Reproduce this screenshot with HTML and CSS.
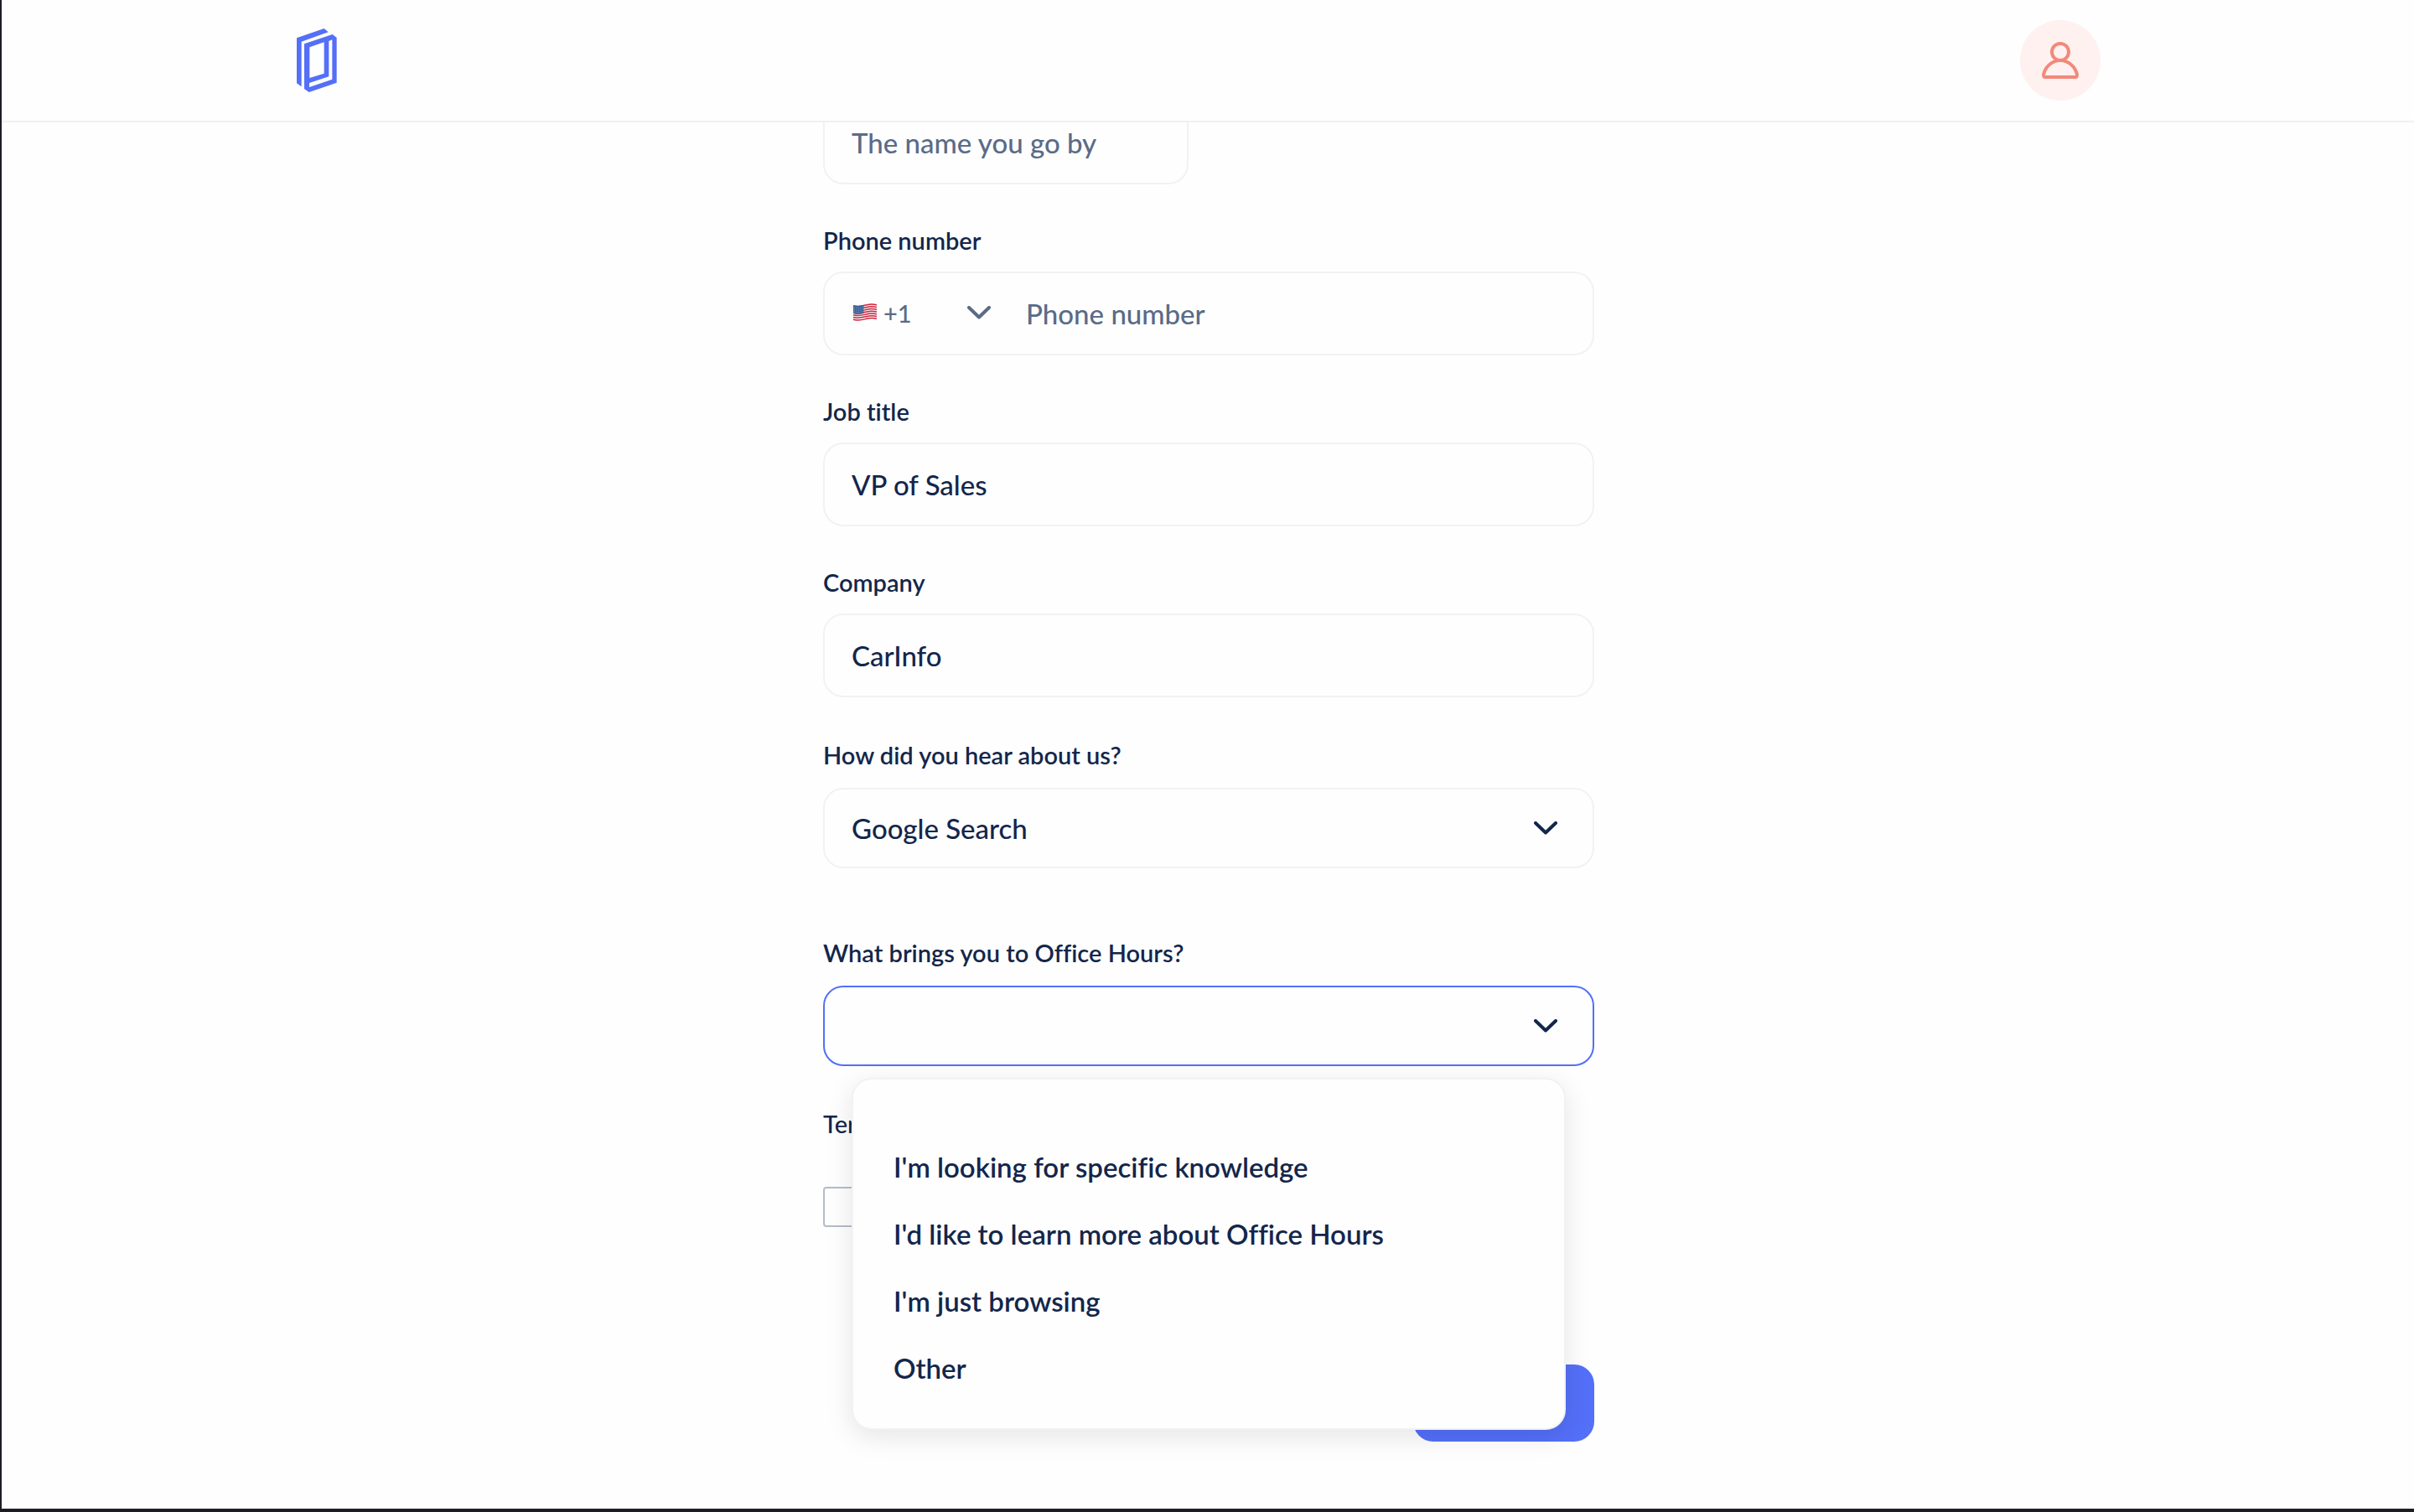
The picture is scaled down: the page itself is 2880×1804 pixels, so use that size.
FILE: index.html
```html
<!DOCTYPE html>
<html lang="en">
<head>
  <meta charset="utf-8">
  <meta name="viewport" content="width=device-width, initial-scale=1">
  <title>Office Hours</title>
  <link rel="stylesheet" href="styles.css">
</head>
<body>
  <header class="topbar">
    <div class="topbar-inner">
      <a class="logo" href="#" aria-label="Office Hours home">
        <svg width="48" height="76" viewBox="0 0 144 228" fill="currentColor" fill-rule="evenodd" aria-hidden="true">
          <path d="M0 34L98 0L113 13L17 47V208L0 196Z"/>
          <path d="M27 55L128 21L143 33V194L44 228L27 216ZM46 67V177L98 161V49ZM115 45V172L45 195V210L127 182V40Z"/>
        </svg>
      </a>
      <button class="avatar" type="button" aria-label="Account">
        <svg width="48" height="48" viewBox="0 0 48 48" fill="none" stroke="currentColor" stroke-width="4" stroke-linejoin="round" aria-hidden="true">
          <circle cx="24" cy="14" r="10"/>
          <path d="M24 24C14 24 6 32 4 41C4 43 4 44 6 44H42C44 44 44 43 44 41C42 32 34 24 24 24Z"/>
        </svg>
      </button>
    </div>
  </header>

  <main class="page">
    <form class="form">
      <div class="field field-half">
        <label class="label" for="name">Preferred name</label>
        <input class="control" id="name" type="text" placeholder="The name you go by">
      </div>

      <div class="field">
        <label class="label" for="phone">Phone number</label>
        <div class="control phone">
          <div class="dial">
            <svg class="flag" width="30" height="22" viewBox="-2 0 30 22" aria-hidden="true">
              <path fill="#f4f2f4" d="M0 2C6 4 12 2 16 1C20 0 24 0 28 1V19C24 18 20 18 16 19C12 20 6 22 0 20Z"/>
              <path fill="none" stroke="#cf2740" stroke-width="1.5" d="M0 2.700C6 4.700 12 2.700 16 1.700S24 .7 28 1.700M0 5.500C6 7.500 12 5.500 16 4.500S24 3.500 28 4.500M0 8.300C6 10.300 12 8.300 16 7.300S24 6.300 28 7.300M0 11C6 13 12 11 16 10S24 9 28 10M0 13.800C6 15.800 12 13.800 16 12.800S24 11.800 28 12.800M0 16.500C6 18.500 12 16.500 16 15.500S24 14.500 28 15.500M0 19.300C6 21.300 12 19.300 16 18.300S24 17.300 28 18.300"/>
              <path fill="#3f6299" d="M0 2C4 3.400 9 3 12.500 2V12C9 13 4 13.400 0 12Z"/>
              <path fill="none" stroke="#8fa6c8" stroke-width="1" stroke-dasharray="1 1.500" d="M1 5C5 6 9 5.500 12 4.500M1 7.500C5 8.500 9 8 12 7M1 10C5 11 9 10.500 12 9.500"/>
            </svg>
            <select class="dial-select" aria-label="Country code">
              <option>+1</option>
            </select>
            <svg class="chevron" width="28" height="16" viewBox="0 0 28 16" aria-hidden="true"><path d="M2 2L14 13.500L26 2"/></svg>
          </div>
          <input class="phone-input" id="phone" type="tel" placeholder="Phone number">
        </div>
      </div>

      <div class="field">
        <label class="label" for="job">Job title</label>
        <input class="control" id="job" type="text" value="VP of Sales">
      </div>

      <div class="field">
        <label class="label" for="company">Company</label>
        <input class="control" id="company" type="text" value="CarInfo">
      </div>

      <div class="field field-select">
        <label class="label" for="source">How did you hear about us?</label>
        <div class="select">
          <select class="control" id="source">
            <option>Google Search</option>
          </select>
          <svg class="chevron" width="28" height="16" viewBox="0 0 28 16" aria-hidden="true"><path d="M2 2L14 13.500L26 2"/></svg>
        </div>
      </div>

      <div class="field field-select field-spaced">
        <label class="label" for="reason">What brings you to Office Hours?</label>
        <div class="select">
          <select class="control control-active" id="reason">
            <option></option>
          </select>
          <svg class="chevron" width="28" height="16" viewBox="0 0 28 16" aria-hidden="true"><path d="M2 2L14 13.500L26 2"/></svg>
          <ul class="menu" role="listbox" aria-label="What brings you to Office Hours?">
            <li class="menu-item" role="option">I'm looking for specific knowledge</li>
            <li class="menu-item" role="option">I'd like to learn more about Office Hours</li>
            <li class="menu-item" role="option">I'm just browsing</li>
            <li class="menu-item" role="option">Other</li>
          </ul>
        </div>
      </div>

      <div class="field field-terms">
        <label class="label label-light" for="terms">Terms</label>
        <input class="checkbox" id="terms" type="checkbox">
      </div>

      <button class="submit" type="submit">Next</button>
    </form>
  </main>
</body>
</html>
```

FILE: styles.css
```css
:root {
  --navy: #13264b;
  --slate: #5a6b87;
  --line: #f1f2f3;
  --blue: #546ff8;
  --frame: #1e1d24;
}

* {
  box-sizing: border-box;
}

body {
  margin: 0;
  min-height: 100vh;
  border-left: 2px solid var(--frame);
  border-bottom: 4px solid var(--frame);
  background: #fefefe;
  color: var(--navy);
  font-family: Lato, "Open Sans", sans-serif;
  font-size: 33px;
  font-weight: 500;
  font-variant-ligatures: none;
}

input,
select,
button {
  font: inherit;
  font-variant-ligatures: none;
  color: inherit;
}

/* Top bar */
.topbar {
  position: fixed;
  top: 0;
  left: 2px;
  right: 0;
  z-index: 2;
  padding-left: 2px;
  border-bottom: 2px solid #f0f1f4;
  background: #fefefe;
}

.topbar-inner {
  display: flex;
  align-items: center;
  justify-content: space-between;
  max-width: 2176px;
  height: 144px;
  margin: 0 auto;
  padding-right: 24px;
}

.logo {
  display: flex;
  color: var(--blue);
}

.avatar {
  display: flex;
  align-items: center;
  justify-content: center;
  width: 96px;
  height: 96px;
  padding: 0;
  border: 0;
  border-radius: 50%;
  background: #fef1ef;
  color: #f08a7b;
}

/* Form */
.page {
  padding: 66px 0 80px 2px;
}

.form {
  display: flex;
  flex-direction: column;
  max-width: 920px;
  margin: 0 auto;
}

.field {
  display: flex;
  flex-direction: column;
  gap: 20px;
  margin-bottom: 50px;
}

.field-half {
  width: 436px;
}

.field-select {
  gap: 22px;
  margin-top: 2px;
  margin-bottom: 52px;
}

.field-spaced {
  margin-top: 32px;
}

.field-terms {
  gap: 58px;
  margin-bottom: 164px;
}

.label {
  font-size: 29px;
  font-weight: 600;
  line-height: 34px;
}

.label-light {
  font-weight: 500;
}

.control {
  width: 100%;
  height: 100px;
  padding: 0 32px;
  border: 2px solid var(--line);
  border-radius: 24px;
  outline: 0;
  background: #fefefe;
  appearance: none;
}

input::placeholder {
  color: var(--slate);
  opacity: 1;
}

.chevron {
  flex: none;
  fill: none;
  stroke: currentColor;
  stroke-width: 4;
  stroke-linecap: round;
  stroke-linejoin: round;
  pointer-events: none;
}

.phone {
  display: flex;
  align-items: center;
  gap: 42px;
}

.dial {
  display: flex;
  align-items: center;
  width: 166px;
  padding-bottom: 2px;
  color: var(--slate);
}

.flag {
  flex: none;
}

.dial-select {
  flex: 1;
  min-width: 0;
  padding: 0 0 0 8px;
  border: 0;
  outline: 0;
  background: none;
  font-size: 29px;
  appearance: none;
}

.phone-input {
  flex: 1;
  min-width: 0;
  padding: 0;
  border: 0;
  outline: 0;
  background: none;
}

.select {
  position: relative;
  display: grid;
  align-items: center;
}

.select .control,
.select .chevron {
  grid-area: 1 / 1;
}

.select .control {
  height: 96px;
}

.select .chevron {
  justify-self: end;
  margin-right: 44px;
  z-index: 1;
}

.control-active {
  border-color: var(--blue);
}

.menu {
  position: absolute;
  top: 110px;
  left: 34px;
  right: 34px;
  z-index: 1;
  margin: 0;
  padding: 64px 48px 32px;
  border: 2px solid var(--line);
  border-radius: 24px;
  background: #fefefe;
  box-shadow: 0 8px 32px rgba(0, 0, 0, 0.1);
  list-style: none;
}

.menu-item {
  font-weight: 600;
  line-height: 80px;
}

.checkbox {
  width: 48px;
  height: 48px;
  margin: 0;
  border: 2px solid #b3bccb;
  border-radius: 4px;
  background: #fefefe;
  appearance: none;
}

.submit {
  align-self: flex-end;
  width: 216px;
  height: 92px;
  border: 0;
  border-radius: 24px;
  background: var(--blue);
  color: #fff;
}
```
